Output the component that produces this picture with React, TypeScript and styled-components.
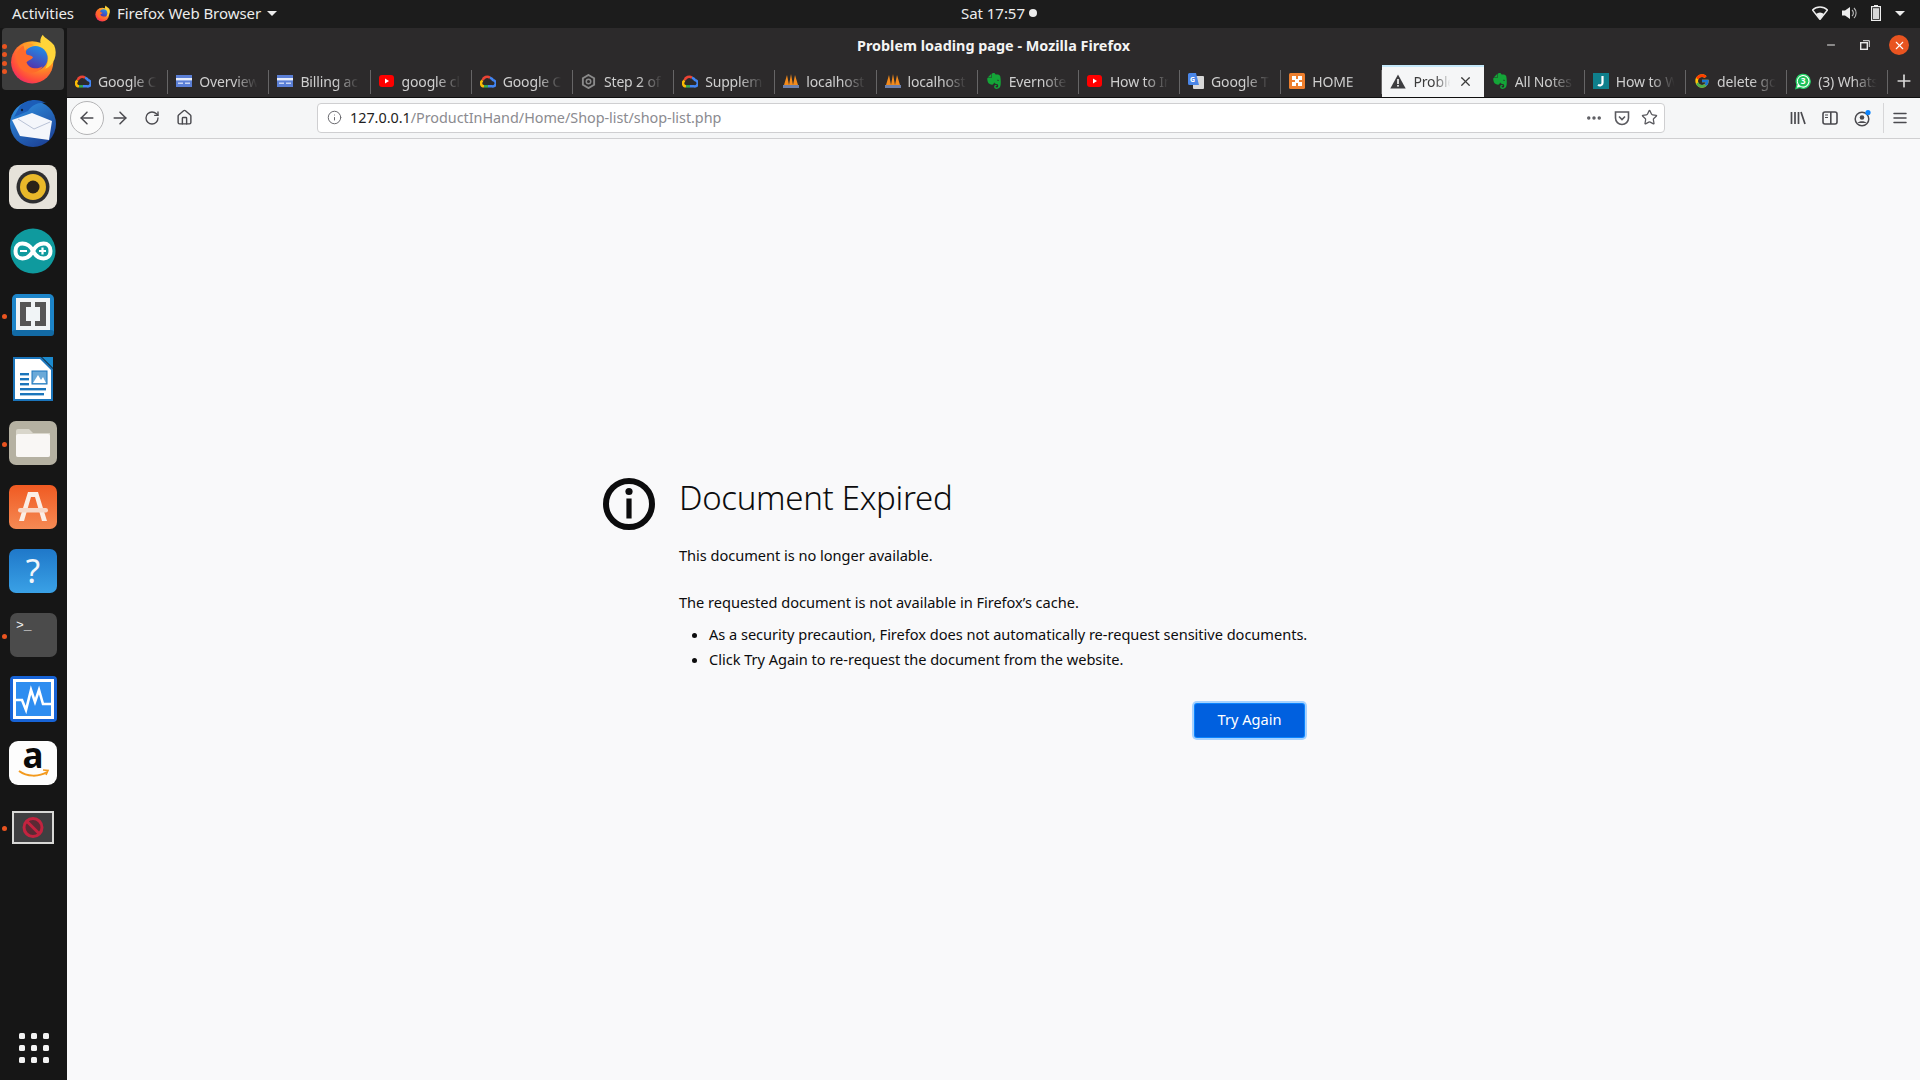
import React from "react";
import styled, { createGlobalStyle } from "styled-components";
import { FcGoogle } from "react-icons/fc";
import { SiEvernote } from "react-icons/si";
import { LuArrowLeft, LuArrowRight, LuRotateCw, LuHouse, LuInfo, LuEllipsis, LuStar, LuX, LuPlus, LuMinus, LuMenu } from "react-icons/lu";

const Global = createGlobalStyle`
  html, body { margin: 0; padding: 0; background: #f9f9fa; }
  * { box-sizing: border-box; }
  body { font-family: "Noto Sans", "Open Sans", sans-serif; }
`;

const Screen = styled.div`
  width: 1920px; height: 1080px; overflow: hidden;
  display: flex; flex-direction: column;
`;
const TopBar = styled.header`
  height: 28px; flex: none; background: #1c1c1c; color: #ececec;
  display: grid; grid-template-columns: 1fr auto 1fr; align-items: center;
  font-size: 15px; letter-spacing: -0.05px; padding: 0 12px 2px;
`;
const TopLeft = styled.div`display: flex; align-items: center;`;
const AppMenu = styled.div`display: flex; align-items: center; gap: 6px; margin-left: 20px;`;
const Clock = styled.div`display: flex; align-items: center; gap: 4px; margin-left: 78px;`;
const TopRight = styled.div`display: flex; align-items: center; justify-content: flex-end; gap: 14px; padding-right: 3px;`;
const Recording = styled.span`width: 8px; height: 8px; border-radius: 50%; background: #ececec;`;
const Caret = styled.span`
  width: 0; height: 0; border-left: 5px solid transparent; border-right: 5px solid transparent;
  border-top: 5px solid #ececec; display: block;
`;
const Body = styled.div`flex: 1; display: flex; min-height: 0;`;
const Dock = styled.nav`
  width: 67px; flex: none; background: #161616; display: flex; flex-direction: column;
`;
const DockItem = styled.div<{ $active?: boolean }>`
  position: relative; height: ${p => (p.$active ? 62 : 64)}px; flex: none;
  margin: 0 3px ${p => (p.$active ? 2 : 0)}px 2px; border-radius: 4px;
  padding-bottom: ${p => (p.$active ? 0 : 2)}px;
  display: flex; align-items: center; justify-content: center;
  background: ${p => (p.$active ? "#3d3d3d" : "transparent")};
`;
const DockDots = styled.div`
  position: absolute; left: 0; top: 0; bottom: 0; display: flex; flex-direction: column;
  justify-content: center; gap: 3.5px;
`;
const DockDot = styled.span`width: 5px; height: 5px; border-radius: 50%; background: #e95420;`;
const DockSpacer = styled.div`flex: 1;`;
const AppGrid = styled.div`
  display: grid; grid-template-columns: repeat(3, 6px); gap: 6px; justify-content: center;
  padding-bottom: 17px;
`;
const GridDot = styled.span`width: 6px; height: 6px; border-radius: 1.5px; background: #f2f2f2;`;
const Win = styled.div`flex: 1; display: flex; flex-direction: column; min-width: 0;`;
const TitleBar = styled.div`
  height: 37px; flex: none; background: #2c2a2b; color: #f4f4f4; position: relative;
  display: flex; align-items: center; justify-content: center; padding-bottom: 2px;
  font-size: 14.4px; font-weight: 700; letter-spacing: 0;
`;
const WinButtons = styled.div`
  position: absolute; right: 11px; top: 7px; display: flex; align-items: center; gap: 14px;
`;
const WinBtn = styled.span`width: 20px; height: 20px; display: flex; align-items: center; justify-content: center; color: #e8e8e8;`;
const CloseBtn = styled(WinBtn)`background: #e95420; border-radius: 50%; color: #fff;`;
const TabStrip = styled.div`
  height: 33px; flex: none; background: #2c2a2b; display: flex; border-bottom: 1px solid #0f0f0f;
`;
const Tab = styled.div<{ $active?: boolean }>`
  width: 101.2px; flex: none; height: 32px; position: relative;
  display: flex; align-items: center; gap: 7px; padding: 0 ${p => (p.$active ? 11 : 10)}px 2px 8px;
  font-size: 14px; letter-spacing: -0.15px;
  color: ${p => (p.$active ? "#3c3c3c" : "#cfcfcf")};
  background: ${p => (p.$active ? "#f5f6f7" : "transparent")};
  border-top: 2px solid ${p => (p.$active ? "#c4e8fa" : "transparent")};
  &::after {
    content: ""; position: absolute; right: 0; top: 3px; bottom: 3px; width: 1px;
    background: ${p => (p.$active ? "transparent" : "rgba(255,255,255,.28)")};
  }
`;
const TabIcon = styled.span`width: 16px; height: 16px; flex: none; display: flex; align-items: center; justify-content: center;`;
const TabLabel = styled.span`
  flex: 1; min-width: 0; overflow: hidden; white-space: nowrap;
  -webkit-mask-image: linear-gradient(to right, #000 58%, transparent 98%);
  mask-image: linear-gradient(to right, #000 58%, transparent 98%);
`;
const NewTab = styled.div`flex: 1; display: flex; align-items: center; justify-content: center; color: #d8d8d8;`;
const NavBar = styled.div`
  height: 41px; flex: none; background: #f5f6f7; border-bottom: 1px solid #cfcfd1;
  display: flex; align-items: center; padding: 0 0 1px 3px; color: #4a4a4f;
`;
const BackBtn = styled.span`
  width: 34px; height: 34px; border-radius: 50%; border: 1px solid #b4b4b6; background: #fbfbfb;
  display: flex; align-items: center; justify-content: center;
`;
const NavBtn = styled.span`width: 32px; height: 32px; display: flex; align-items: center; justify-content: center;`;
const UrlBar = styled.div`
  width: 1348px; height: 30px; margin-left: 117px; flex: none; background: #fff;
  border: 1px solid #cfcfd1; border-radius: 4px;
  display: flex; align-items: center; padding: 0 0 0 9px; font-size: 14.4px; letter-spacing: -0.03px;
`;
const UrlText = styled.div`flex: 1; margin-left: 8px; color: #8b8b90; white-space: nowrap; padding-bottom: 1px;`;
const UrlHost = styled.span`color: #1e1e22;`;
const UrlActions = styled.div`display: flex; align-items: center; gap: 11px; padding-right: 6px; color: #5a5a5f;`;
const ToolGroup = styled.div`display: flex; align-items: center; gap: 16px; margin-left: 125px;`;
const Divider = styled.span`width: 1px; height: 30px; background: #d6d6d8; margin-left: 11px; flex: none;`;
const MenuBtn = styled.span`margin-left: 7px; display: flex;`;
const Page = styled.main`
  flex: 1; background: #f9f9fa; display: flex; align-items: center; justify-content: center; color: #0c0c0d;
  padding-bottom: 4px;
`;
const ErrorBox = styled.article`
  width: 780px; padding-right: 76px; margin-left: -1px; display: flex; gap: 24px; align-items: flex-start;
`;
const ErrorIcon = styled.svg`width: 52px; height: 52px; flex: none;`;
const ErrorText = styled.div`flex: 1; min-width: 0; font-size: 14.6px; line-height: 25px; letter-spacing: -0.03px;`;
const Title = styled.h1`
  margin: 0; font-size: 33px; line-height: 40px; font-weight: 300; letter-spacing: -0.3px;
`;
const Para = styled.p<{ $gap: number }>`margin: ${p => p.$gap}px 0 0;`;
const Bullets = styled.ul`margin: 7px 0 0; padding: 0 0 0 30px; white-space: nowrap;`;
const ActionRow = styled.div`display: flex; justify-content: flex-end; margin-top: 32px; padding-right: 3px;`;
const TryAgain = styled.button`
  width: 109px; height: 33px; border: 0; border-radius: 2px; background: #0060df; color: #fff;
  font: inherit; box-shadow: 0 0 0 1px #0a84ff, 0 0 0 3px #a6d2ff; padding: 0 0 2px;
`;

const FirefoxLogo = ({ size, uid }: { size: number; uid: string }) => (
  <svg width={size} height={size} viewBox="0 0 64 64">
    <defs>
      <radialGradient id={uid + "a"} cx="0.72" cy="0.2" r="1">
        <stop offset="0" stopColor="#ffe040" />
        <stop offset="0.4" stopColor="#ff9a1f" />
        <stop offset="0.75" stopColor="#ff4a3d" />
        <stop offset="1" stopColor="#e31587" />
      </radialGradient>
      <linearGradient id={uid + "b"} x1="0.7" y1="0" x2="0.3" y2="1">
        <stop offset="0" stopColor="#1e8fe8" />
        <stop offset="1" stopColor="#5a2aa6" />
      </linearGradient>
    </defs>
    <circle cx="31" cy="36" r="26" fill={`url(#${uid}a)`} />
    <path d="M44 2 C38 10 42 16 47 20 C52 25 52 36 47 44 C58 40 63 26 58 15 C54 9 47 7 44 2Z" fill="#ffd53a" />
    <circle cx="35" cy="31" r="15" fill={`url(#${uid}b)`} />
    <path d="M12 24 C18 14 25 13 30 14 C25 17 22 22 24 26 C26 28 31 27 32 30 C30 33 26 33 24 36 C26 43 36 46 44 41 C40 50 24 52 16 43 C12 37 11 30 12 24Z" fill="#ff6a2b" />
    <path d="M20 14 C25 12 31 13 33 15 C28 16 24 18 22 22Z" fill="#ff9b2e" />
  </svg>
);
const GCloud = () => (
  <svg width="16" height="14" viewBox="0 0 24 20">
    <path d="M15 5 A7 7 0 0 0 4 9" fill="none" stroke="#ea4335" strokeWidth="3.8" />
    <path d="M15 5 A7 7 0 0 1 20 10" fill="none" stroke="#4285f4" strokeWidth="3.8" />
    <path d="M20 9 A4.5 4.5 0 0 1 18 18 H12" fill="none" stroke="#4285f4" strokeWidth="3.8" />
    <path d="M12 18 H6" fill="none" stroke="#34a853" strokeWidth="3.8" />
    <path d="M6 18 A4.5 4.5 0 0 1 4 9.5" fill="none" stroke="#fbbc05" strokeWidth="3.8" />
  </svg>
);
const Card = () => (
  <svg width="16" height="14" viewBox="0 0 16 14">
    <rect y="1" width="16" height="12" fill="#5b7fd6" />
    <rect y="4" width="16" height="2.4" fill="#e9eefb" />
    <rect x="2" y="8.5" width="5" height="1.5" fill="#c7d4f3" />
    <rect x="9" y="8.5" width="5" height="1.5" fill="#c7d4f3" />
  </svg>
);
const YouTube = () => (
  <svg width="15" height="12" viewBox="0 0 15 12">
    <rect width="15" height="12" rx="3" fill="#f00" />
    <path d="M6 3.5 L10 6 L6 8.5Z" fill="#fff" />
  </svg>
);
const Gear = () => (
  <svg width="15" height="15" viewBox="0 0 16 16">
    <path d="M8 1 L14 4.5 V11.5 L8 15 L2 11.5 V4.5Z" fill="none" stroke="#8a8a8a" strokeWidth="2" />
    <circle cx="8" cy="8" r="2.4" fill="none" stroke="#8a8a8a" strokeWidth="1.6" />
  </svg>
);
const Sails = () => (
  <svg width="16" height="16" viewBox="0 0 16 16">
    <path d="M4 2 L1 12 H6Z M8 1 L6 12 H10Z M12 2 L10 12 H15Z" fill="#f28a1c" />
    <rect x="0" y="12" width="16" height="3" fill="#6d7fa8" />
  </svg>
);
const Translate = () => (
  <svg width="16" height="17" viewBox="0 0 16 17">
    <rect x="5" y="3" width="11" height="13" rx="1" fill="#d8d8d8" />
    <path d="M1.5 0 H8 L11 12 H1.5 A1.5 1.5 0 0 1 0 10.5 V1.5 A1.5 1.5 0 0 1 1.5 0Z" fill="#4a86e8" />
    <text x="2" y="9" fontSize="7" fontWeight="700" fill="#fff" fontFamily="Noto Sans">G</text>
  </svg>
);
const Xampp = () => (
  <svg width="16" height="16" viewBox="0 0 16 16">
    <rect width="16" height="16" rx="1.5" fill="#ee7f2d" />
    <path d="M3 3 H7 V6 H9 V3 H13 V7 H10 V9 H13 V13 H9 V10 H7 V13 H3 V9 H6 V7 H3Z" fill="#fff" />
  </svg>
);
const Warning = () => (
  <svg width="16" height="15" viewBox="0 0 16 15">
    <path d="M8 0.5 L15.7 14.5 H0.3Z" fill="#3d3d40" />
    <rect x="7.2" y="5" width="1.6" height="5" fill="#fff" />
    <rect x="7.2" y="11" width="1.6" height="1.6" fill="#fff" />
  </svg>
);
const JBadge = () => (
  <svg width="16" height="16" viewBox="0 0 16 16">
    <rect width="16" height="16" fill="#0f7f8c" />
    <path d="M9.5 3 V10 C9.5 12.5 6.5 12.8 5 11.8" fill="none" stroke="#fff" strokeWidth="2.2" />
  </svg>
);
const WaBadge = () => (
  <svg width="17" height="17" viewBox="0 0 17 17">
    <path d="M1 16 L2.2 11.8 A7.4 7.4 0 1 1 5.2 14.8Z" fill="#fff" stroke="#25d366" strokeWidth="1.4" />
    <circle cx="8.6" cy="8.2" r="5.6" fill="#1fc25a" />
    <text x="8.6" y="11.4" fontSize="9" fontWeight="700" textAnchor="middle" fill="#fff" fontFamily="Noto Sans">3</text>
  </svg>
);

type TabData = { label: string; icon: React.ReactNode; active?: boolean };
const green = <SiEvernote size={16} color="#14a538" />;
const tabs: TabData[] = [
  { label: "Google Cloud", icon: <GCloud /> },
  { label: "Overview", icon: <Card /> },
  { label: "Billing acc", icon: <Card /> },
  { label: "google clo", icon: <YouTube /> },
  { label: "Google Clo", icon: <GCloud /> },
  { label: "Step 2 of", icon: <Gear /> },
  { label: "Supplemen", icon: <GCloud /> },
  { label: "localhost", icon: <Sails /> },
  { label: "localhost", icon: <Sails /> },
  { label: "Evernote", icon: green },
  { label: "How to Ins", icon: <YouTube /> },
  { label: "Google Tra", icon: <Translate /> },
  { label: "HOME", icon: <Xampp /> },
  { label: "Problem", icon: <Warning />, active: true },
  { label: "All Notes", icon: green },
  { label: "How to Wr", icon: <JBadge /> },
  { label: "delete goo", icon: <FcGoogle size={16} /> },
  { label: "(3) WhatsApp", icon: <WaBadge /> },
];

const Thunderbird = () => (
  <svg width="50" height="50" viewBox="0 0 50 50">
    <defs>
      <linearGradient id="tb" x1="0.2" y1="0" x2="0.8" y2="1">
        <stop offset="0" stopColor="#2f8fe0" />
        <stop offset="1" stopColor="#1b3f94" />
      </linearGradient>
    </defs>
    <circle cx="25" cy="26" r="23" fill="url(#tb)" />
    <path d="M4 22 L24 15 L44 23 L41 42 L12 38Z" fill="#f4f6fb" />
    <path d="M10 21 L26 31 L42 24" fill="none" stroke="#b9c2d6" strokeWidth="1" />
    <path d="M12 8 C18 1 30 0 38 5 C30 4 24 7 20 13 L6 19Z" fill="#1c5db8" />
    <circle cx="14" cy="12" r="1.2" fill="#10203f" />
  </svg>
);
const Rhythmbox = () => (
  <svg width="50" height="46" viewBox="0 0 50 46">
    <rect width="48" height="44" x="1" y="1" rx="8" fill="#e6e2da" />
    <circle cx="25" cy="23" r="16.5" fill="#2e2e30" />
    <circle cx="25" cy="23" r="13" fill="#e9b92a" />
    <circle cx="25" cy="23" r="6.5" fill="#2b2418" />
  </svg>
);
const Arduino = () => (
  <svg width="48" height="46" viewBox="0 0 48 46">
    <circle cx="24" cy="23" r="22.5" fill="#0f9a9e" />
    <path d="M6.5 23 C6.5 13 19 13 24 23 C29 33 41.5 33 41.5 23 C41.5 13 29 13 24 23 C19 33 6.5 33 6.5 23Z" fill="none" stroke="#fff" strokeWidth="4" />
    <path d="M11 23 H18 M30 23 H37 M33.5 19.5 V26.5" stroke="#fff" strokeWidth="2.2" />
  </svg>
);
const Brackets = () => (
  <svg width="42" height="42" viewBox="0 0 42 42">
    <rect width="42" height="42" rx="5" fill="#1d85c9" />
    <rect y="36" width="42" height="6" rx="3" fill="#126aa5" />
    <rect x="4" y="4" width="34" height="32" fill="#f0f4f6" />
    <path d="M19 8 H8 V32 H19 V27 H14 V13 H19Z M23 8 H34 V32 H23 V27 H28 V13 H23Z" fill="#555" />
  </svg>
);
const Writer = () => (
  <svg width="42" height="46" viewBox="0 0 42 46">
    <path d="M1 1 H29 L41 13 V45 H1Z" fill="#1b75bb" />
    <path d="M3 3 H28 L39 14 V43 H3Z" fill="#fff" />
    <path d="M30 1 H41 V12Z" fill="#1b8bd0" />
    <rect x="8" y="17" width="9" height="2.4" fill="#1b75bb" />
    <rect x="8" y="22" width="9" height="2.4" fill="#1b75bb" />
    <rect x="8" y="27" width="9" height="2.4" fill="#1b75bb" />
    <rect x="8" y="32" width="26" height="2.4" fill="#1b75bb" />
    <rect x="8" y="37" width="24" height="2.4" fill="#1b75bb" />
    <rect x="20" y="15" width="15" height="13" fill="#6aa9d8" stroke="#1b75bb" />
    <path d="M21 27 L26 19 L29 24 L31 21 L34 27Z" fill="#fff" />
  </svg>
);
const Files = () => (
  <svg width="48" height="44" viewBox="0 0 48 44">
    <rect width="48" height="44" rx="7" fill="#b5b1a2" />
    <path d="M7 10 a2 2 0 0 1 2 -2 H20 L24 12 H41 V34 a2 2 0 0 1 -2 2 H9 a2 2 0 0 1 -2 -2Z" fill="#d9d6cb" />
    <path d="M7 15 a2 2 0 0 1 2 -2 H39 a2 2 0 0 1 2 2 V34 a2 2 0 0 1 -2 2 H9 a2 2 0 0 1 -2 -2Z" fill="#f9f7f5" />
  </svg>
);
const Software = () => (
  <svg width="48" height="44" viewBox="0 0 48 44">
    <defs>
      <linearGradient id="sw" x1="0" y1="0" x2="0" y2="1">
        <stop offset="0" stopColor="#f05a22" />
        <stop offset="1" stopColor="#f58a54" />
      </linearGradient>
    </defs>
    <rect width="48" height="44" rx="7" fill="url(#sw)" />
    <path d="M19 7 H29 L38 36 H33 L26 12 H22 L15 36 H10Z" fill="#fbeee6" />
    <rect x="9" y="23" width="30" height="4.5" rx="2.2" fill="#f7d8c8" />
  </svg>
);
const Help = () => (
  <svg width="48" height="44" viewBox="0 0 48 44">
    <defs>
      <linearGradient id="hp" x1="0" y1="0" x2="0" y2="1">
        <stop offset="0" stopColor="#1f78c9" />
        <stop offset="1" stopColor="#3aa1e6" />
      </linearGradient>
    </defs>
    <rect width="48" height="44" rx="7" fill="url(#hp)" />
    <text x="24" y="34" fontSize="33" textAnchor="middle" fill="#f2f6fa" fontFamily="Noto Sans">?</text>
  </svg>
);
const Terminal = () => (
  <svg width="47" height="44" viewBox="0 0 47 44">
    <rect width="47" height="44" rx="7" fill="#4b4b4b" />
    <text x="6" y="16" fontSize="13" fill="#f2f2f2" fontFamily="Liberation Mono">&gt;_</text>
  </svg>
);
const Monitor = () => (
  <svg width="47" height="46" viewBox="0 0 47 46">
    <rect width="47" height="46" rx="4" fill="#1763d6" />
    <rect x="3" y="3" width="41" height="40" fill="#fff" />
    <rect x="6" y="6" width="35" height="34" fill="#2e8df0" />
    <path d="M6 24 H12 L16 34 L21 14 L25 26 L29 14 L33 28 H41" fill="none" stroke="#fff" strokeWidth="2.6" />
  </svg>
);
const Amazon = () => (
  <svg width="48" height="44" viewBox="0 0 48 44">
    <rect width="48" height="44" rx="9" fill="#fdfdfd" />
    <text x="24" y="27" fontSize="35" fontWeight="700" textAnchor="middle" fill="#0a0a0a" fontFamily="Noto Sans">a</text>
    <path d="M10 30 C18 36 30 36 38 31" fill="none" stroke="#f39a1e" strokeWidth="2" />
    <path d="M34 29 L39 29.5 L37 34" fill="none" stroke="#f39a1e" strokeWidth="1.6" />
  </svg>
);
const Blocked = () => (
  <svg width="42" height="33" viewBox="0 0 42 33">
    <rect width="42" height="33" fill="#d8d8d6" />
    <rect x="2" y="2" width="38" height="29" fill="#3f3f41" />
    <circle cx="21" cy="16.5" r="9" fill="#5a2a34" stroke="#c3233f" strokeWidth="3" />
    <path d="M15 10.5 L27 22.5" stroke="#c3233f" strokeWidth="3" />
  </svg>
);

const dock: { icon: React.ReactNode; dots: number; active?: boolean }[] = [
  { icon: <FirefoxLogo size={52} uid="ff1" />, dots: 4, active: true },
  { icon: <Thunderbird />, dots: 0 },
  { icon: <Rhythmbox />, dots: 0 },
  { icon: <Arduino />, dots: 0 },
  { icon: <Brackets />, dots: 1 },
  { icon: <Writer />, dots: 0 },
  { icon: <Files />, dots: 1 },
  { icon: <Software />, dots: 0 },
  { icon: <Help />, dots: 0 },
  { icon: <Terminal />, dots: 1 },
  { icon: <Monitor />, dots: 0 },
  { icon: <Amazon />, dots: 0 },
  { icon: <Blocked />, dots: 1 },
];

const Wifi = () => (
  <svg width="16" height="14" viewBox="0 0 16 14">
    <path d="M0.5 4 A11 11 0 0 1 15.5 4 L8 13.5Z" fill="none" stroke="#eee" strokeWidth="1.4" />
    <path d="M4 8 A6 6 0 0 1 12 8 L8 13Z" fill="#eee" />
  </svg>
);
const Speaker = () => (
  <svg width="15" height="14" viewBox="0 0 15 14">
    <path d="M0 4.5 H3 L8 1 V13 L3 9.5 H0Z" fill="#eee" />
    <path d="M10 4 A4 4 0 0 1 10 10 M12 2 A7 7 0 0 1 12 12" fill="none" stroke="#bbb" strokeWidth="1.1" />
  </svg>
);
const Battery = () => (
  <svg width="10" height="16" viewBox="0 0 10 16">
    <rect x="3" y="0" width="4" height="2" fill="#eee" />
    <rect x="0.6" y="1.6" width="8.8" height="13.8" fill="none" stroke="#eee" strokeWidth="1.2" />
    <rect x="2" y="3.2" width="6" height="10.8" fill="#d8d8d8" />
  </svg>
);
const Restore = () => (
  <svg width="10" height="10" viewBox="0 0 10 10">
    <rect x="0.7" y="2.7" width="6.6" height="6.6" fill="none" stroke="#e8e8e8" strokeWidth="1.4" />
    <path d="M3 0.7 H9.3 V7" fill="none" stroke="#e8e8e8" />
  </svg>
);
const Pocket = () => (
  <svg width="16" height="16" viewBox="0 0 16 16">
    <path d="M1.5 2 H14.5 V8 A6.5 6.5 0 0 1 1.5 8Z" fill="none" stroke="#5a5a5f" strokeWidth="1.6" />
    <path d="M5 6.5 L8 9.5 L11 6.5" fill="none" stroke="#5a5a5f" strokeWidth="1.6" />
  </svg>
);
const Library = () => (
  <svg width="16" height="16" viewBox="0 0 16 16">
    <path d="M1.5 2 V14 M5 2 V14 M8.5 2 V14 M11 2 L15 14" stroke="#4a4a4f" strokeWidth="1.7" fill="none" />
  </svg>
);
const Sidebar = () => (
  <svg width="16" height="16" viewBox="0 0 16 16">
    <rect x="1" y="2" width="14" height="12" rx="2" fill="none" stroke="#4a4a4f" strokeWidth="1.6" />
    <rect x="8" y="2" width="1.6" height="12" fill="#4a4a4f" />
    <path d="M3 5 H6 M3 7.5 H6" stroke="#4a4a4f" />
  </svg>
);
const Account = () => (
  <svg width="18" height="18" viewBox="0 0 18 18">
    <circle cx="8" cy="10" r="6.8" fill="none" stroke="#4a4a4f" strokeWidth="1.5" />
    <circle cx="8" cy="8.5" r="2.3" fill="#4a4a4f" />
    <path d="M3.5 14 C5 11.5 11 11.5 12.5 14" fill="#4a4a4f" />
    <circle cx="14" cy="3.5" r="2.6" fill="#0a84ff" />
  </svg>
);

export default function App() {
  return (
    <Screen>
      <Global />
      <TopBar>
        <TopLeft>
          Activities
          <AppMenu>
            <FirefoxLogo size={17} uid="ff2" />
            Firefox Web Browser
            <Caret />
          </AppMenu>
        </TopLeft>
        <Clock>
          Sat 17:57
          <Recording />
        </Clock>
        <TopRight>
          <Wifi />
          <Speaker />
          <Battery />
          <Caret />
        </TopRight>
      </TopBar>
      <Body>
        <Dock>
          {dock.map((d, i) => (
            <DockItem key={i} $active={d.active}>
              {d.dots > 0 && (
                <DockDots>
                  {Array.from({ length: d.dots }).map((_, j) => (
                    <DockDot key={j} />
                  ))}
                </DockDots>
              )}
              {d.icon}
            </DockItem>
          ))}
          <DockSpacer />
          <AppGrid>
            {Array.from({ length: 9 }).map((_, i) => (
              <GridDot key={i} />
            ))}
          </AppGrid>
        </Dock>
        <Win>
          <TitleBar>
            Problem loading page - Mozilla Firefox
            <WinButtons>
              <WinBtn><LuMinus size={12} strokeWidth={2} /></WinBtn>
              <WinBtn><Restore /></WinBtn>
              <CloseBtn><LuX size={13} strokeWidth={2} /></CloseBtn>
            </WinButtons>
          </TitleBar>
          <TabStrip>
            {tabs.map((t, i) => (
              <Tab key={i} $active={t.active}>
                <TabIcon>{t.icon}</TabIcon>
                <TabLabel>{t.label}</TabLabel>
                {t.active && <LuX size={15} strokeWidth={2} />}
              </Tab>
            ))}
            <NewTab><LuPlus size={20} strokeWidth={2} /></NewTab>
          </TabStrip>
          <NavBar>
            <BackBtn><LuArrowLeft size={20} strokeWidth={1.8} /></BackBtn>
            <NavBtn><LuArrowRight size={20} strokeWidth={1.8} /></NavBtn>
            <NavBtn><LuRotateCw size={16} strokeWidth={2} /></NavBtn>
            <NavBtn><LuHouse size={17} strokeWidth={2} /></NavBtn>
            <UrlBar>
              <LuInfo size={15} strokeWidth={1.6} color="#6a6a6f" />
              <UrlText>
                <UrlHost>127.0.0.1</UrlHost>/ProductInHand/Home/Shop-list/shop-list.php
              </UrlText>
              <UrlActions>
                <LuEllipsis size={18} strokeWidth={2.6} />
                <Pocket />
                <LuStar size={17} strokeWidth={1.8} />
              </UrlActions>
            </UrlBar>
            <ToolGroup>
              <Library />
              <Sidebar />
              <Account />
            </ToolGroup>
            <Divider />
            <MenuBtn><LuMenu size={18} strokeWidth={2} /></MenuBtn>
          </NavBar>
          <Page>
            <ErrorBox>
              <ErrorIcon viewBox="0 0 52 52">
                <circle cx="26" cy="26" r="23" fill="none" stroke="#0c0c0d" strokeWidth="6" />
                <circle cx="26" cy="13.5" r="3.6" fill="#0c0c0d" />
                <rect x="23.4" y="20.5" width="5.2" height="20" fill="#0c0c0d" />
              </ErrorIcon>
              <ErrorText>
                <Title>Document Expired</Title>
                <Para $gap={25}>This document is no longer available.</Para>
                <Para $gap={22}>The requested document is not available in Firefox’s cache.</Para>
                <Bullets>
                  <li>As a security precaution, Firefox does not automatically re-request sensitive documents.</li>
                  <li>Click Try Again to re-request the document from the website.</li>
                </Bullets>
                <ActionRow>
                  <TryAgain>Try Again</TryAgain>
                </ActionRow>
              </ErrorText>
            </ErrorBox>
          </Page>
        </Win>
      </Body>
    </Screen>
  );
}
